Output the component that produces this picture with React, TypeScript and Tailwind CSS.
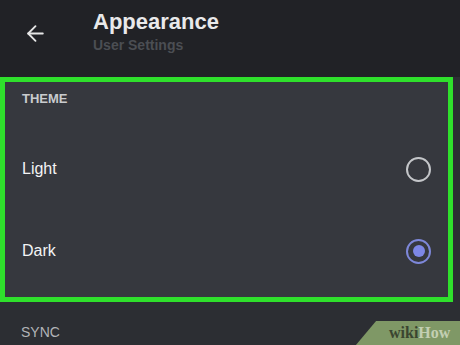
import { ArrowLeft } from "lucide-react";

function Radio({ checked }: { checked?: boolean }) {
  if (checked) {
    return (
      <span className="flex h-[25px] w-[25px] items-center justify-center rounded-full border-[2.5px] border-[#7d87d9]">
        <span className="h-[12px] w-[12px] rounded-full bg-[#7d87e6]" />
      </span>
    );
  }
  return <span className="h-[25px] w-[25px] rounded-full border-[2.5px] border-[#c4c6c9]" />;
}

function Option({ label, checked }: { label: string; checked?: boolean }) {
  return (
    <div className="flex h-[82px] items-center justify-between pl-[17px] pr-[17px]">
      <span className="text-[16px] text-[#f3f4f5]">{label}</span>
      <Radio checked={checked} />
    </div>
  );
}

export default function App() {
  return (
    <div
      className="relative h-[345px] w-[460px] overflow-hidden bg-[#2c2e33]"
      style={{ fontFamily: '"Liberation Sans", Arial, sans-serif' }}
    >
      <header className="flex h-[77px] items-start bg-[#212226]">
        <div className="flex w-[93px] pl-[23px] pt-[21px]">
          <ArrowLeft className="h-[25px] w-[25px] text-[#e6e6e6]" strokeWidth={1.8} />
        </div>
        <div className="flex flex-col pt-[8px]">
          <span className="text-[22px] font-bold leading-[28px] text-[#e9e9ea]">Appearance</span>
          <span className="text-[14px] font-bold leading-[18px] text-[#4b4e53]">User Settings</span>
        </div>
      </header>

      <section className="h-[225px] w-[453px] border-[5px] border-[#2fe02c] bg-[#36383e]">
        <div className="pl-[17px] pt-[9px] text-[13px] font-bold leading-[15px] text-[#c9cbce]">THEME</div>
        <div className="pt-[22px]">
          <Option label="Light" />
          <Option label="Dark" checked />
        </div>
      </section>

      <div className="pl-[21px] pt-[22px] text-[14px] leading-[16px] text-[#b2b4b8]">SYNC</div>

      <div className="absolute bottom-0 right-[-14px] flex h-[24px] w-[108px] -skew-x-[40deg] items-center justify-center bg-[#7f9866]">
        <span
          className="skew-x-[40deg] text-[16px] font-bold"
          style={{ fontFamily: '"Liberation Serif", "Times New Roman", serif' }}
        >
          <span className="text-[#3a4530]">wiki</span>
          <span className="text-[#c3cfb2]">How</span>
        </span>
      </div>
    </div>
  );
}
